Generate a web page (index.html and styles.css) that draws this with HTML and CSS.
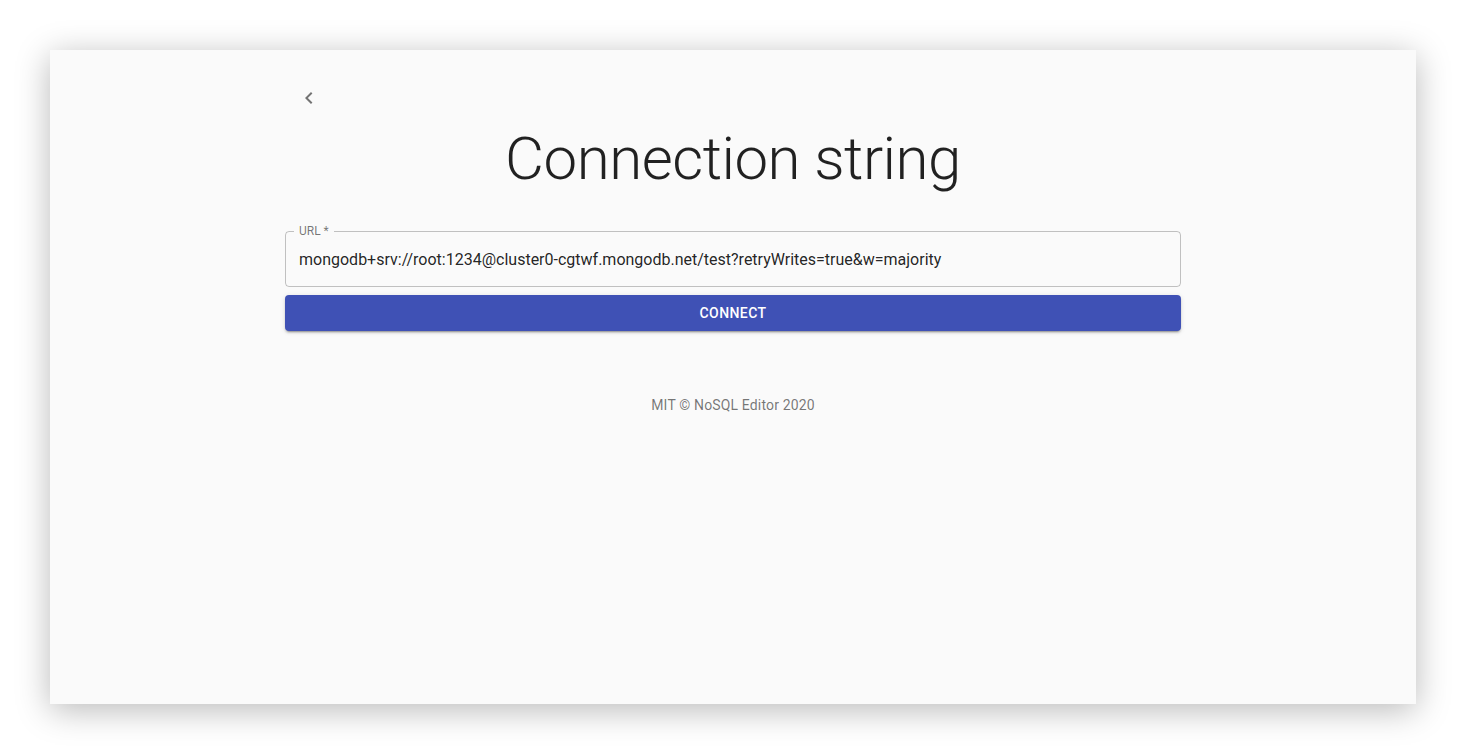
FILE: index.html
```html
<!DOCTYPE html>
<html lang="en">
<head>
<meta charset="utf-8">
<title>Connection string</title>
<link rel="stylesheet" href="styles.css">
</head>
<body>
<div class="window">
  <div class="container">
    <button class="back-btn" aria-label="back">
      <svg viewBox="0 0 24 24" width="24" height="24"><path d="M15.41 7.41L14 6l-6 6 6 6 1.41-1.41L10.83 12z" fill="currentColor"/></svg>
    </button>
    <h2 class="title">Connection string</h2>
    <div class="field">
      <span class="field-label">URL *</span>
      <div class="field-input">mongodb+srv://root:1234@cluster0-cgtwf.mongodb.net/test?retryWrites=true&amp;w=majority</div>
    </div>
    <button class="connect">CONNECT</button>
    <p class="footer">MIT © NoSQL Editor 2020</p>
  </div>
</div>
</body>
</html>
```
FILE: styles.css
```css
html, body {
  margin: 0;
  padding: 0;
  background: #ffffff;
}
body {
  padding: 50px;
  font-family: Roboto, "Liberation Sans", sans-serif;
}
.window {
  width: 1366px;
  height: 654px;
  background: #fafafa;
  box-shadow: 0 6px 32px rgba(0, 0, 0, 0.28);
  display: flex;
  justify-content: center;
}
.container {
  width: 896px;
  display: flex;
  flex-direction: column;
  padding-top: 24px;
}
.back-btn {
  width: 48px;
  height: 48px;
  padding: 12px;
  border: 0;
  background: transparent;
  color: rgba(0, 0, 0, 0.54);
  border-radius: 50%;
  display: flex;
  align-items: center;
  justify-content: center;
  cursor: pointer;
}
.back-btn svg {
  display: block;
}
.title {
  margin: 1px 0 0;
  font-size: 60px;
  font-weight: 300;
  line-height: 72px;
  letter-spacing: -0.00833em;
  color: rgba(0, 0, 0, 0.87);
  text-align: center;
}
.field {
  position: relative;
  margin-top: 36px;
  height: 56px;
  box-sizing: border-box;
  border: 1px solid rgba(0, 0, 0, 0.23);
  border-radius: 4px;
  display: flex;
  align-items: center;
  padding: 0 13px;
}
.field-label {
  position: absolute;
  top: -8px;
  left: 8px;
  padding: 0 5px;
  background: #fafafa;
  font-size: 12px;
  line-height: 14px;
  color: rgba(0, 0, 0, 0.54);
}
.field-input {
  font-size: 16px;
  line-height: 19px;
  color: rgba(0, 0, 0, 0.87);
  white-space: nowrap;
}
.connect {
  margin-top: 8px;
  height: 36px;
  border: 0;
  border-radius: 4px;
  background: #3f51b5;
  color: #ffffff;
  font-family: Roboto, "Liberation Sans", sans-serif;
  font-size: 14px;
  font-weight: 500;
  letter-spacing: 0.02857em;
  box-shadow: 0px 3px 1px -2px rgba(0,0,0,0.2), 0px 2px 2px 0px rgba(0,0,0,0.14), 0px 1px 5px 0px rgba(0,0,0,0.12);
  cursor: pointer;
}
.footer {
  margin: 64px 0 0;
  text-align: center;
  font-size: 14px;
  line-height: 20px;
  color: rgba(0, 0, 0, 0.54);
  letter-spacing: 0.01071em;
}
```
